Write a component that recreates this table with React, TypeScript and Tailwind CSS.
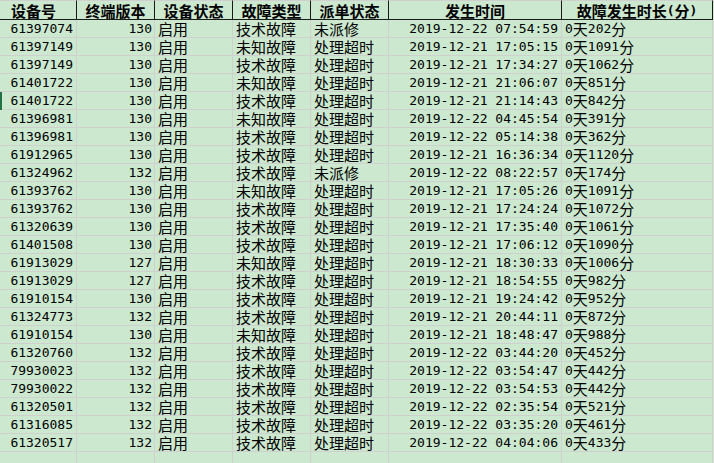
import React from "react";

const rows: string[][] = [
  ["61397074", "130", "启用", "技术故障", "未派修", "2019-12-22 07:54:59", "0天202分"],
  ["61397149", "130", "启用", "未知故障", "处理超时", "2019-12-21 17:05:15", "0天1091分"],
  ["61397149", "130", "启用", "技术故障", "处理超时", "2019-12-21 17:34:27", "0天1062分"],
  ["61401722", "130", "启用", "未知故障", "处理超时", "2019-12-21 21:06:07", "0天851分"],
  ["61401722", "130", "启用", "技术故障", "处理超时", "2019-12-21 21:14:43", "0天842分"],
  ["61396981", "130", "启用", "未知故障", "处理超时", "2019-12-22 04:45:54", "0天391分"],
  ["61396981", "130", "启用", "技术故障", "处理超时", "2019-12-22 05:14:38", "0天362分"],
  ["61912965", "130", "启用", "技术故障", "处理超时", "2019-12-21 16:36:34", "0天1120分"],
  ["61324962", "132", "启用", "技术故障", "未派修", "2019-12-22 08:22:57", "0天174分"],
  ["61393762", "130", "启用", "未知故障", "处理超时", "2019-12-21 17:05:26", "0天1091分"],
  ["61393762", "130", "启用", "技术故障", "处理超时", "2019-12-21 17:24:24", "0天1072分"],
  ["61320639", "130", "启用", "技术故障", "处理超时", "2019-12-21 17:35:40", "0天1061分"],
  ["61401508", "130", "启用", "技术故障", "处理超时", "2019-12-21 17:06:12", "0天1090分"],
  ["61913029", "127", "启用", "未知故障", "处理超时", "2019-12-21 18:30:33", "0天1006分"],
  ["61913029", "127", "启用", "技术故障", "处理超时", "2019-12-21 18:54:55", "0天982分"],
  ["61910154", "130", "启用", "技术故障", "处理超时", "2019-12-21 19:24:42", "0天952分"],
  ["61324773", "132", "启用", "技术故障", "处理超时", "2019-12-21 20:44:11", "0天872分"],
  ["61910154", "130", "启用", "未知故障", "处理超时", "2019-12-21 18:48:47", "0天988分"],
  ["61320760", "132", "启用", "技术故障", "处理超时", "2019-12-22 03:44:20", "0天452分"],
  ["79930023", "132", "启用", "技术故障", "处理超时", "2019-12-22 03:54:47", "0天442分"],
  ["79930022", "132", "启用", "技术故障", "处理超时", "2019-12-22 03:54:53", "0天442分"],
  ["61320501", "132", "启用", "技术故障", "处理超时", "2019-12-22 02:35:54", "0天521分"],
  ["61316085", "132", "启用", "技术故障", "处理超时", "2019-12-22 03:35:20", "0天461分"],
  ["61320517", "132", "启用", "技术故障", "处理超时", "2019-12-22 04:04:06", "0天433分"],
];

const headers = ["设备号", "终端版本", "设备状态", "故障类型", "派单状态", "发生时间", "故障发生时长(分)"];

const cols = "grid grid-cols-[77px_78px_78px_78px_78px_173px_151px_1fr]";

function Mixed({ text, bold }: { text: string; bold?: boolean }) {
  const parts = text.match(/[\x00-\x7f]+|[^\x00-\x7f]+/g) || [];
  return (
    <>
      {parts.map((p, i) =>
        /^[\x00-\x7f]/.test(p) ? (
          <span
            key={i}
            className={
              bold
                ? "inline-block h-[16px] leading-[16px] font-['DejaVu_Sans_Mono',monospace] text-[13px] font-bold whitespace-pre"
                : "inline-block h-[16px] leading-[16px] font-['DejaVu_Sans_Mono',monospace] text-[13px] whitespace-pre"
            }
          >
            {p}
          </span>
        ) : (
          <span
            key={i}
            className={
              bold
                ? "inline-block h-[16px] leading-[16px] font-['Noto_Sans_CJK_SC',sans-serif] text-[15px] font-bold"
                : "inline-block h-[16px] leading-[16px] font-['Noto_Sans_CJK_SC',sans-serif] text-[15px]"
            }
          >
            {p}
          </span>
        )
      )}
    </>
  );
}

const align = [
  "justify-end pr-[3px]",
  "justify-end pr-[2px]",
  "justify-start pl-[3px]",
  "justify-start pl-[3px]",
  "justify-start pl-[3px]",
  "justify-end pr-[3px]",
  "justify-start pl-[3px]",
];

export default function App() {
  return (
    <div className="relative w-[714px] h-[463px] overflow-hidden bg-[#cce8cf] text-black">
      <div className={`${cols} h-[20px]`}>
        {headers.map((h, i) => (
          <div
            key={i}
            className={
              i === 0
                ? "flex items-end justify-start pl-[11px] h-[20px] border-t border-t-[#d0d0d0] border-b border-b-[#1a1a1a] border-r border-r-[#1a1a1a] leading-[16px] whitespace-nowrap"
                : "flex items-end justify-center h-[20px] border-t border-t-[#d0d0d0] border-b border-b-[#1a1a1a] border-r border-r-[#1a1a1a] leading-[16px] whitespace-nowrap"
            }
          >
            <Mixed text={h} bold />
          </div>
        ))}
        <div className="h-[20px] border-t border-t-[#d0d0d0]" />
      </div>
      {rows.map((r, ri) => (
        <div key={ri} className={`${cols} h-[18px]`}>
          {r.map((c, ci) => (
            <div
              key={ci}
              className={`flex items-end ${align[ci]} h-[18px] border-b border-r border-[#d0d0d0] leading-[16px] whitespace-nowrap`}
            >
              <Mixed text={c} />
            </div>
          ))}
          <div className="h-[18px]" />
        </div>
      ))}
      <div className={`${cols} h-[18px]`}>
        {headers.map((_, i) => (
          <div key={i} className="h-[18px] border-b border-r border-[#d0d0d0]" />
        ))}
        <div className="h-[18px]" />
      </div>
      <div className="absolute left-0 top-[92px] w-[2px] h-[18px] bg-[#217346]" />
    </div>
  );
}
